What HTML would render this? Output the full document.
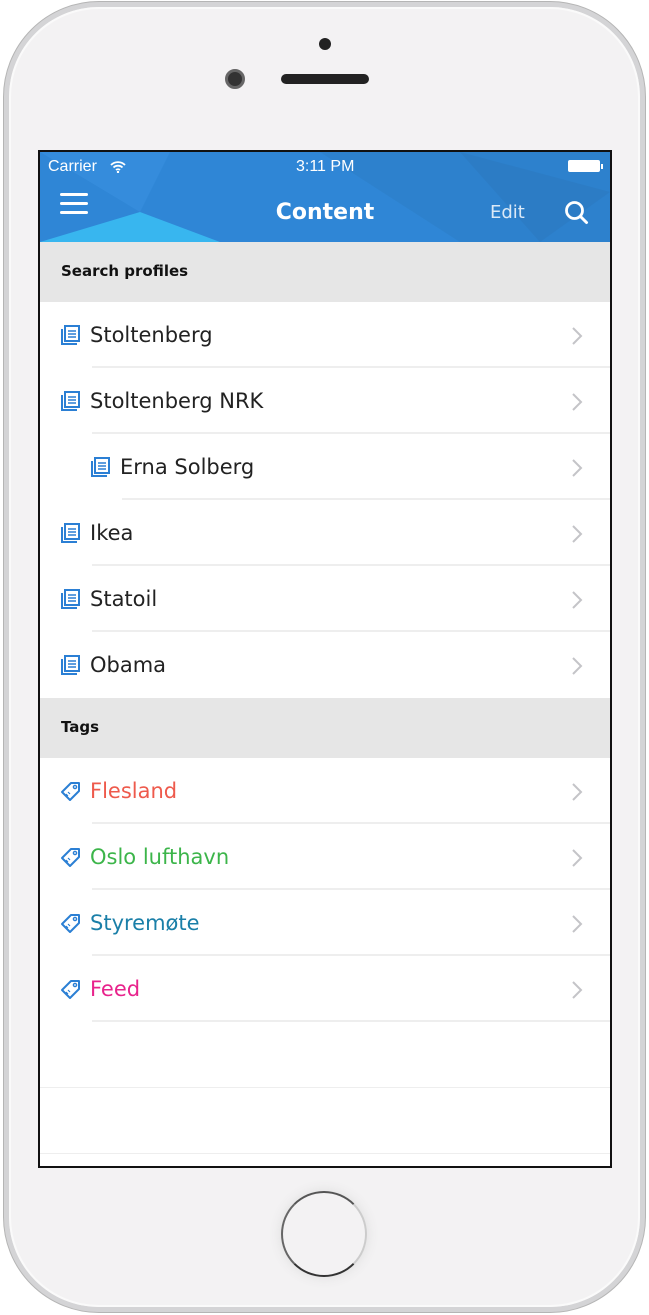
<!DOCTYPE html>
<html><head><meta charset="utf-8"><style>
*{margin:0;padding:0;box-sizing:border-box}
body{width:649px;height:1315px;background:#fff;position:relative;overflow:hidden;font-family:"DejaVu Sans","Liberation Sans",sans-serif}
.phone{position:absolute;left:3px;top:1px;width:643px;height:1312px;border-radius:96px;background:#d4d4d6;border:1px solid #b5b5b5}
.phone2{position:absolute;left:9px;top:7px;width:631px;height:1300px;border-radius:90px;background:#f3f2f3;box-shadow:inset 0 0 0 2px #fafafa}
.screen{position:absolute;left:38px;top:150px;width:574px;height:1018px;border:2px solid #111;background:#fff;overflow:hidden}
.nav{position:absolute;left:0;top:0;width:570px;height:90px;background:#2f86d6;overflow:hidden}
.hdr{position:absolute;left:0;width:570px;height:60px;background:#e6e6e6;font-size:15px;color:#111;padding:20px 0 0 21px;font-weight:600}
.row{position:absolute;left:0;width:570px;height:66px;font-size:21px;color:#222}
.row .t{position:absolute;top:21px}
.row .ic{position:absolute;top:22px}
.row .ch{position:absolute;left:531px;top:24px}
.sep{position:absolute;left:52px;right:0;bottom:0;height:2px;background:#eee}
</style></head><body>
<div class="phone"></div>
<div class="phone2"></div>
<div style="position:absolute;left:319px;top:38px;width:12px;height:12px;border-radius:50%;background:#222"></div>
<div style="position:absolute;left:225px;top:69px;width:20px;height:20px;border-radius:50%;background:#333;border:3px solid #666"></div>
<div style="position:absolute;left:281px;top:74px;width:88px;height:10px;border-radius:5px;background:#222"></div>
<div style="position:absolute;left:281px;top:1191px;width:86px;height:86px;border-radius:50%;border:2px solid #666;border-top-color:#555;border-bottom-color:#333;border-right-color:#ccc;box-shadow:0 0 12px #ddd"></div>
<div class="screen">
 <div class="nav">
  <svg width="570" height="90" style="position:absolute;left:0;top:0"><polygon points="280,0 570,0 570,90 420,90" fill="#2d7fc6" opacity=".6"/><polygon points="100,60 0,90 180,90" fill="#38b6ef"/><polygon points="100,60 130,0 0,0" fill="#3b91e0" opacity=".6"/><polygon points="420,0 500,90 570,40" fill="#2a76b8" opacity=".4"/></svg>
  <div style="position:absolute;left:8px;top:6px;color:#fff;font-size:16px;font-family:'Liberation Sans',sans-serif">Carrier</div>
  <svg style="position:absolute;left:70px;top:8px" width="16" height="13" viewBox="0 0 16 13"><path d="M1 5a10 10 0 0 1 14 0M3.5 7.5a6.5 6.5 0 0 1 9 0M6 10a3 3 0 0 1 4 0" stroke="#fff" stroke-width="1.8" fill="none"/><circle cx="8" cy="12" r="1.2" fill="#fff"/></svg>
  <div style="position:absolute;left:256px;top:6px;color:#fff;font-size:16px;font-family:'Liberation Sans',sans-serif">3:11 PM</div>
  <div style="position:absolute;left:528px;top:8px;width:32px;height:12px;background:#fff;border-radius:2px"></div>
  <div style="position:absolute;left:561px;top:12px;width:2px;height:5px;background:#fff"></div>
  <div style="position:absolute;left:20px;top:59px;width:28px;height:3px;background:#fff;border-radius:2px;box-shadow:0 -9px 0 #fff,0 -18px 0 #fff"></div>
  <div style="position:absolute;left:0;width:570px;top:48px;text-align:center;color:#fff;font-size:22px;font-weight:600">Content</div>
  <div style="position:absolute;left:450px;top:50px;color:#dbe9f7;font-size:18px">Edit</div>
  <svg style="position:absolute;left:524px;top:48px" width="26" height="26" viewBox="0 0 26 26"><circle cx="10.5" cy="10.5" r="8" stroke="#fff" stroke-width="2.8" fill="none"/><path d="M16.5 16.5l6 6" stroke="#fff" stroke-width="3" stroke-linecap="round"/></svg>
 </div>
 <div class="hdr" style="top:90px">Search profiles</div>
 <div class="row" style="top:150px"><svg class="ic" style="left:20px" width="22" height="22" viewBox="0 0 22 22"><path d="M2 5v15h15" stroke="#2b7fd4" stroke-width="2" fill="none"/><rect x="5" y="2" width="14" height="15" stroke="#2b7fd4" stroke-width="2" fill="none"/><path d="M8 7h8M8 10h8M8 13h8" stroke="#2b7fd4" stroke-width="1.5"/></svg><span class="t" style="left:50px">Stoltenberg</span><svg class="ch" width="12" height="20"><path d="M2 2l8 8-8 8" stroke="#c4c4c8" stroke-width="2" fill="none"/></svg><div class="sep"></div></div>
 <div class="row" style="top:216px"><svg class="ic" style="left:20px" width="22" height="22" viewBox="0 0 22 22"><path d="M2 5v15h15" stroke="#2b7fd4" stroke-width="2" fill="none"/><rect x="5" y="2" width="14" height="15" stroke="#2b7fd4" stroke-width="2" fill="none"/><path d="M8 7h8M8 10h8M8 13h8" stroke="#2b7fd4" stroke-width="1.5"/></svg><span class="t" style="left:50px">Stoltenberg NRK</span><svg class="ch" width="12" height="20"><path d="M2 2l8 8-8 8" stroke="#c4c4c8" stroke-width="2" fill="none"/></svg><div class="sep"></div></div>
 <div class="row" style="top:282px"><svg class="ic" style="left:50px" width="22" height="22" viewBox="0 0 22 22"><path d="M2 5v15h15" stroke="#2b7fd4" stroke-width="2" fill="none"/><rect x="5" y="2" width="14" height="15" stroke="#2b7fd4" stroke-width="2" fill="none"/><path d="M8 7h8M8 10h8M8 13h8" stroke="#2b7fd4" stroke-width="1.5"/></svg><span class="t" style="left:80px">Erna Solberg</span><svg class="ch" width="12" height="20"><path d="M2 2l8 8-8 8" stroke="#c4c4c8" stroke-width="2" fill="none"/></svg><div class="sep" style="left:82px"></div></div>
 <div class="row" style="top:348px"><svg class="ic" style="left:20px" width="22" height="22" viewBox="0 0 22 22"><path d="M2 5v15h15" stroke="#2b7fd4" stroke-width="2" fill="none"/><rect x="5" y="2" width="14" height="15" stroke="#2b7fd4" stroke-width="2" fill="none"/><path d="M8 7h8M8 10h8M8 13h8" stroke="#2b7fd4" stroke-width="1.5"/></svg><span class="t" style="left:50px">Ikea</span><svg class="ch" width="12" height="20"><path d="M2 2l8 8-8 8" stroke="#c4c4c8" stroke-width="2" fill="none"/></svg><div class="sep"></div></div>
 <div class="row" style="top:414px"><svg class="ic" style="left:20px" width="22" height="22" viewBox="0 0 22 22"><path d="M2 5v15h15" stroke="#2b7fd4" stroke-width="2" fill="none"/><rect x="5" y="2" width="14" height="15" stroke="#2b7fd4" stroke-width="2" fill="none"/><path d="M8 7h8M8 10h8M8 13h8" stroke="#2b7fd4" stroke-width="1.5"/></svg><span class="t" style="left:50px">Statoil</span><svg class="ch" width="12" height="20"><path d="M2 2l8 8-8 8" stroke="#c4c4c8" stroke-width="2" fill="none"/></svg><div class="sep"></div></div>
 <div class="row" style="top:480px"><svg class="ic" style="left:20px" width="22" height="22" viewBox="0 0 22 22"><path d="M2 5v15h15" stroke="#2b7fd4" stroke-width="2" fill="none"/><rect x="5" y="2" width="14" height="15" stroke="#2b7fd4" stroke-width="2" fill="none"/><path d="M8 7h8M8 10h8M8 13h8" stroke="#2b7fd4" stroke-width="1.5"/></svg><span class="t" style="left:50px">Obama</span><svg class="ch" width="12" height="20"><path d="M2 2l8 8-8 8" stroke="#c4c4c8" stroke-width="2" fill="none"/></svg></div>
 <div class="hdr" style="top:546px">Tags</div>
 <div class="row" style="top:606px"><svg class="ic" style="left:20px" width="22" height="22" viewBox="0 0 22 22"><path d="M2 12L11 3h8v8l-9 9z" stroke="#2b7fd4" stroke-width="2" fill="none" stroke-linejoin="round"/><circle cx="15" cy="7" r="1.6" stroke="#2b7fd4" stroke-width="1.4" fill="none"/><path d="M6 14l2 2M8 12l2 2" stroke="#2b7fd4" stroke-width="1.2"/></svg><span class="t" style="left:50px;color:#ee5a4c">Flesland</span><svg class="ch" width="12" height="20"><path d="M2 2l8 8-8 8" stroke="#c4c4c8" stroke-width="2" fill="none"/></svg><div class="sep"></div></div>
 <div class="row" style="top:672px"><svg class="ic" style="left:20px" width="22" height="22" viewBox="0 0 22 22"><path d="M2 12L11 3h8v8l-9 9z" stroke="#2b7fd4" stroke-width="2" fill="none" stroke-linejoin="round"/><circle cx="15" cy="7" r="1.6" stroke="#2b7fd4" stroke-width="1.4" fill="none"/><path d="M6 14l2 2M8 12l2 2" stroke="#2b7fd4" stroke-width="1.2"/></svg><span class="t" style="left:50px;color:#3cb54a">Oslo lufthavn</span><svg class="ch" width="12" height="20"><path d="M2 2l8 8-8 8" stroke="#c4c4c8" stroke-width="2" fill="none"/></svg><div class="sep"></div></div>
 <div class="row" style="top:738px"><svg class="ic" style="left:20px" width="22" height="22" viewBox="0 0 22 22"><path d="M2 12L11 3h8v8l-9 9z" stroke="#2b7fd4" stroke-width="2" fill="none" stroke-linejoin="round"/><circle cx="15" cy="7" r="1.6" stroke="#2b7fd4" stroke-width="1.4" fill="none"/><path d="M6 14l2 2M8 12l2 2" stroke="#2b7fd4" stroke-width="1.2"/></svg><span class="t" style="left:50px;color:#1a7fa8">Styremøte</span><svg class="ch" width="12" height="20"><path d="M2 2l8 8-8 8" stroke="#c4c4c8" stroke-width="2" fill="none"/></svg><div class="sep"></div></div>
 <div class="row" style="top:804px"><svg class="ic" style="left:20px" width="22" height="22" viewBox="0 0 22 22"><path d="M2 12L11 3h8v8l-9 9z" stroke="#2b7fd4" stroke-width="2" fill="none" stroke-linejoin="round"/><circle cx="15" cy="7" r="1.6" stroke="#2b7fd4" stroke-width="1.4" fill="none"/><path d="M6 14l2 2M8 12l2 2" stroke="#2b7fd4" stroke-width="1.2"/></svg><span class="t" style="left:50px;color:#e8238c">Feed</span><svg class="ch" width="12" height="20"><path d="M2 2l8 8-8 8" stroke="#c4c4c8" stroke-width="2" fill="none"/></svg><div class="sep"></div></div>
 <div style="position:absolute;left:0;right:0;top:935px;height:1px;background:#eee"></div>
 <div style="position:absolute;left:0;right:0;top:1001px;height:1px;background:#eee"></div>
</div>
</body></html>
